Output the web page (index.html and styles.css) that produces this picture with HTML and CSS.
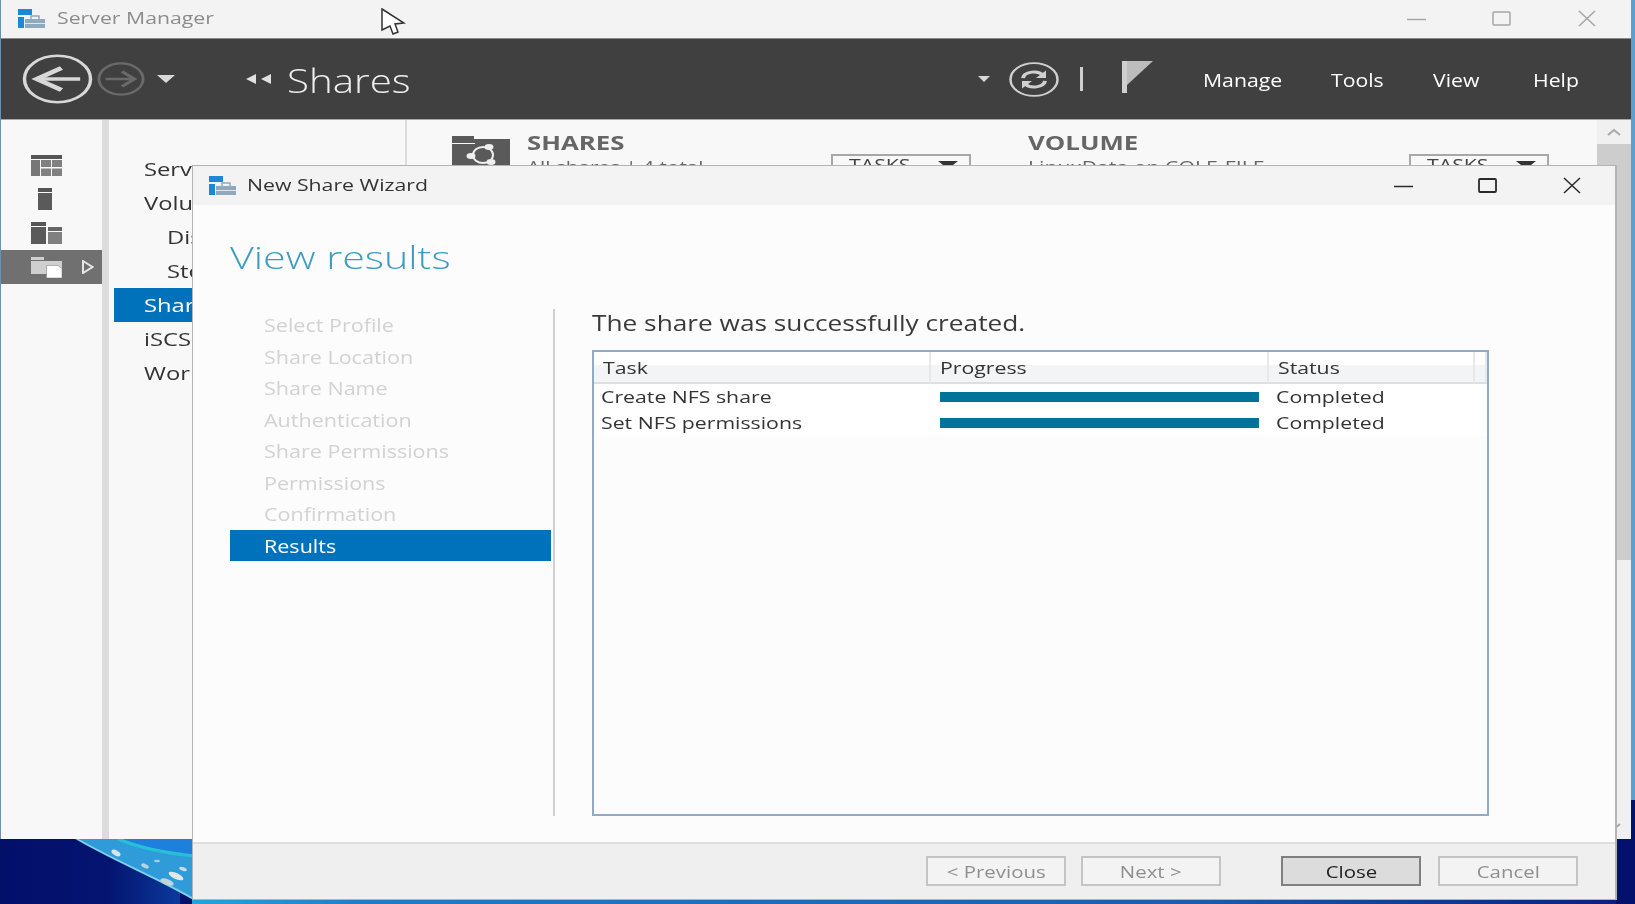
FILE: index.html
```html
<!DOCTYPE html>
<html lang="en">
<head>
    <title>Server Manager - New Share Wizard</title>
    <link rel="stylesheet" href="styles.css">
</head>
<body>
    <div class="desktop">
        <!-- wallpaper, only the corners show behind the windows -->
        <svg class="wallpaper" width="1635" height="904" viewBox="0 0 1635 904">
            <defs>
                <linearGradient id="strip" x1="0" y1="0" x2="1" y2="0">
                    <stop offset="0" stop-color="#25a5dc"/>
                    <stop offset="0.12" stop-color="#1f7cc9"/>
                    <stop offset="0.7" stop-color="#1c5cb0"/>
                    <stop offset="1" stop-color="#0a1f80"/>
                </linearGradient>
                <linearGradient id="navy" x1="0" y1="0" x2="1" y2="0">
                    <stop offset="0" stop-color="#03106a"/>
                    <stop offset="0.6" stop-color="#041470"/>
                    <stop offset="1" stop-color="#0b3a9c"/>
                </linearGradient>
            </defs>
            <rect width="1635" height="904" fill="#04116c"/>
            <rect x="0" y="836" width="180" height="68" fill="url(#navy)"/>
            <rect x="1631" y="0" width="4" height="800" fill="#5f9fd0"/>
            <rect x="0" y="0" width="2" height="839" fill="#6d8fb0"/>
            <path d="M72 836 L200 836 L230 904 L202 904 C160 878 115 862 72 836 Z" fill="#2f9bd8"/>
            <path d="M72 836 C115 862 160 878 202 904" fill="none" stroke="#7fd0ea" stroke-width="2"/>
            <path d="M118 839 C140 848 165 853 194 856 L194 839 Z" fill="#1d80dc"/>
            <path d="M118 839 C140 848 165 853 194 856" fill="none" stroke="#28c0d8" stroke-width="3"/>
            <ellipse cx="116" cy="853" rx="5" ry="2.5" fill="#d8e4ec" transform="rotate(30 116 853)"/>
            <ellipse cx="145" cy="866" rx="4" ry="2" fill="#b8d4e4" transform="rotate(25 145 866)"/>
            <ellipse cx="157" cy="861" rx="3" ry="1.2" fill="#a8cce0"/>
            <ellipse cx="176" cy="876" rx="8" ry="3" fill="#e0e8ec" transform="rotate(25 176 876)"/>
            <ellipse cx="183" cy="869" rx="4" ry="1.8" fill="#c8dce8" transform="rotate(20 183 869)"/>
            <ellipse cx="167" cy="882" rx="7" ry="3" fill="#c0d4dc" transform="rotate(20 167 882)"/>
            <rect x="192" y="899" width="1424" height="5" fill="url(#strip)"/>
        </svg>

        <div class="manager-window">
            <div class="manager-title">
                <svg class="app-icon" width="27" height="20" viewBox="0 0 27 20">
                    <rect x="0" y="0" width="14" height="6" fill="#1e88d8"/>
                    <rect x="0" y="8" width="6" height="11" fill="#1e88d8"/>
                    <path d="M7 10 H27 V19 H7 Z" fill="#8fa9bd"/>
                    <path d="M13 10 V7 H21 V10" fill="none" stroke="#8fa9bd" stroke-width="1.5"/>
                    <rect x="7" y="14" width="20" height="1" fill="#dfe8ee"/>
                </svg>
                <span class="manager-name stretch">Server Manager</span>
                <div class="window-buttons">
                    <svg width="20" height="20" viewBox="0 0 20 20"><path d="M0 10.5 H19" stroke="#a6a6a6" stroke-width="1.5"/></svg>
                    <svg width="20" height="20" viewBox="0 0 20 20"><rect x="1" y="3" width="17" height="13" rx="1" fill="none" stroke="#a6a6a6" stroke-width="1.5"/></svg>
                    <svg width="20" height="20" viewBox="0 0 20 20"><path d="M2 2 L18 17 M18 2 L2 17" stroke="#a6a6a6" stroke-width="1.5"/></svg>
                </div>
            </div>

            <div class="toolbar">
                <svg class="nav-back" width="71" height="50" viewBox="0 0 72 72" preserveAspectRatio="none">
                    <circle cx="36" cy="36" r="33.5" fill="none" stroke="#d8d8d8" stroke-width="3.5"/>
                    <path d="M59 36 H20" fill="none" stroke="#d8d8d8" stroke-width="5"/>
                    <path d="M40 20 L15 36 L40 52" fill="none" stroke="#d8d8d8" stroke-width="6"/>
                </svg>
                <svg class="nav-forward" width="48" height="34" viewBox="0 0 50 50" preserveAspectRatio="none">
                    <circle cx="25" cy="25" r="23" fill="none" stroke="#6a6a6a" stroke-width="3"/>
                    <path d="M9 25 H36 M26 14 L39 25 L26 36" fill="none" stroke="#6a6a6a" stroke-width="4"/>
                </svg>
                <span class="caret caret-big"></span>
                <svg class="crumb-arrows" width="25" height="10" viewBox="0 0 25 10">
                    <path d="M0 5 L10 0 V10 Z M15 5 L25 0 V10 Z" fill="#e0e0e0"/>
                </svg>
                <div class="crumb"><span class="stretch">Shares</span></div>
                <span class="caret caret-small"></span>
                <svg class="refresh" width="50" height="35" viewBox="0 0 50 50" preserveAspectRatio="none">
                    <circle cx="25" cy="25" r="23.5" fill="none" stroke="#cfcfcf" stroke-width="2.5"/>
                    <path d="M14 23 C15 14 29 11 34 19 M36 27 C35 36 21 39 16 31" fill="none" stroke="#cfcfcf" stroke-width="4"/>
                    <path d="M37 12 V23 H27 Z M13 38 V27 H23 Z" fill="#cfcfcf"/>
                </svg>
                <span class="toolbar-sep"></span>
                <svg class="flag" width="31" height="32" viewBox="0 0 31 32">
                    <rect x="0" y="0" width="5" height="32" fill="#cfcfcf"/>
                    <path d="M5 0 H31 L5 24 Z" fill="#bdbdbd"/>
                </svg>
                <nav class="menu">
                    <span><span class="stretch">Manage</span></span>
                    <span><span class="stretch">Tools</span></span>
                    <span><span class="stretch">View</span></span>
                    <span><span class="stretch">Help</span></span>
                </nav>
            </div>

            <div class="manager-body">
                <div class="icon-bar">
                    <div class="icon-row">
                        <svg width="31" height="21" viewBox="0 0 31 21">
                            <rect width="31" height="4" fill="#555"/>
                            <path d="M0 5 H9 V21 H0 Z" fill="#777"/>
                            <path d="M10 5 H20 V12 H10 Z M21 5 H31 V12 H21 Z M10 13.500 H20 V21 H10 Z M21 13.500 H31 V21 H21 Z" fill="#808080"/>
                        </svg>
                    </div>
                    <div class="icon-row">
                        <svg class="icon-server" width="14" height="22" viewBox="0 0 14 22">
                            <rect width="14" height="4" fill="#555"/>
                            <rect y="5" width="14" height="17" fill="#5a5a5a"/>
                        </svg>
                    </div>
                    <div class="icon-row">
                        <svg width="31" height="22" viewBox="0 0 31 22">
                            <rect width="15" height="4" fill="#555"/>
                            <rect y="5" width="15" height="17" fill="#5a5a5a"/>
                            <rect x="17" y="5" width="14" height="4" fill="#666"/>
                            <rect x="17" y="10" width="14" height="12" fill="#808080"/>
                        </svg>
                    </div>
                    <div class="icon-row icon-row-active">
                        <svg width="31" height="21" viewBox="0 0 31 21">
                            <path d="M0 0 H13 V3 H0 Z" fill="#cfcfcf"/>
                            <path d="M0 4 H31 V17 H0 Z" fill="#cfcfcf"/>
                            <path d="M15.500 8.500 H27 L31 11.500 V21 H15.500 Z" fill="#fff" stroke="#8a8a8a" stroke-width="0.6"/>
                        </svg>
                        <svg class="row-arrow" width="12" height="14" viewBox="0 0 12 14">
                            <path d="M1 1 L10.500 7 L1 13 Z" fill="none" stroke="#e6e6e6" stroke-width="2"/>
                        </svg>
                    </div>
                </div>
                <div class="splitter"></div>
                <ul class="section-list">
                    <li><span class="stretch">Servers</span></li>
                    <li><span class="stretch">Volumes</span></li>
                    <li class="sub"><span class="stretch">Disks</span></li>
                    <li class="sub"><span class="stretch">Storage Pools</span></li>
                    <li class="selected"><span class="stretch">Shares</span></li>
                    <li><span class="stretch">iSCSI</span></li>
                    <li><span class="stretch">Work Folders</span></li>
                </ul>
                <div class="shares-page">
                    <svg class="shares-icon" width="58" height="46" viewBox="0 0 58 46">
                        <path d="M0 0 H22 V3 H58 V46 H0 Z" fill="#5a5a5a"/>
                        <path d="M0 7 H23 V8 H0 Z" fill="#f8f8f8"/>
                        <ellipse cx="31" cy="19" rx="10" ry="8" fill="none" stroke="#f0f0f0" stroke-width="2"/>
                        <ellipse cx="37" cy="11" rx="4.5" ry="3" fill="#f0f0f0"/>
                        <ellipse cx="19" cy="20" rx="4.5" ry="3" fill="#f0f0f0"/>
                        <ellipse cx="39" cy="26" rx="4.5" ry="3" fill="#f0f0f0"/>
                    </svg>
                    <div class="panel-head panel-shares">
                        <h2 class="stretch">SHARES</h2>
                        <p class="stretch">All shares | 4 total</p>
                    </div>
                    <div class="tasks"><span class="stretch">TASKS</span><span class="caret caret-tasks"></span></div>
                    <div class="panel-head panel-volume">
                        <h2 class="stretch">VOLUME</h2>
                        <p class="stretch">LinuxData on COLE-FILE</p>
                    </div>
                    <div class="tasks"><span class="stretch">TASKS</span><span class="caret caret-tasks"></span></div>
                </div>
                <div class="scrollbar">
                    <div class="scroll-btn">
                        <svg width="14" height="8" viewBox="0 0 14 8"><path d="M1 7 L7 2 L13 7" fill="none" stroke="#a8a8a8" stroke-width="2"/></svg>
                    </div>
                    <div class="scroll-thumb"></div>
                    <div class="scroll-btn scroll-down">
                        <svg width="14" height="8" viewBox="0 0 14 8"><path d="M1 1 L7 6 L13 1" fill="none" stroke="#a8a8a8" stroke-width="2"/></svg>
                    </div>
                </div>
            </div>
        </div>

        <div class="wizard">
            <div class="wizard-title">
                <svg class="app-icon" width="27" height="20" viewBox="0 0 27 20">
                    <rect x="0" y="0" width="14" height="6" fill="#1e88d8"/>
                    <rect x="0" y="8" width="6" height="11" fill="#1e88d8"/>
                    <path d="M7 10 H27 V19 H7 Z" fill="#8fa9bd"/>
                    <path d="M13 10 V7 H21 V10" fill="none" stroke="#8fa9bd" stroke-width="1.5"/>
                    <rect x="7" y="14" width="20" height="1" fill="#dfe8ee"/>
                </svg>
                <span class="wizard-name stretch">New Share Wizard</span>
                <div class="wizard-buttons">
                    <svg width="20" height="20" viewBox="0 0 20 20"><path d="M0 10.500 H19" stroke="#2a2a2a" stroke-width="1.500"/></svg>
                    <svg width="20" height="20" viewBox="0 0 20 20"><rect x="1" y="3" width="17" height="13" rx="1" fill="none" stroke="#2a2a2a" stroke-width="1.800"/></svg>
                    <svg width="20" height="20" viewBox="0 0 20 20"><path d="M2 2 L18 17 M18 2 L2 17" stroke="#2a2a2a" stroke-width="1.500"/></svg>
                </div>
            </div>

            <div class="wizard-body">
                <h1 class="wizard-heading">View results</h1>
                <div class="wizard-columns">
                    <ul class="steps">
                        <li><span class="stretch">Select Profile</span></li>
                        <li><span class="stretch">Share Location</span></li>
                        <li><span class="stretch">Share Name</span></li>
                        <li><span class="stretch">Authentication</span></li>
                        <li><span class="stretch">Share Permissions</span></li>
                        <li><span class="stretch">Permissions</span></li>
                        <li><span class="stretch">Confirmation</span></li>
                        <li class="current"><span class="stretch">Results</span></li>
                    </ul>
                    <div class="results">
                        <p class="success"><span class="stretch">The share was successfully created.</span></p>
                        <div class="task-list">
                            <div class="task-head">
                                <span><span class="stretch">Task</span></span>
                                <span><span class="stretch">Progress</span></span>
                                <span><span class="stretch">Status</span></span>
                                <span></span>
                            </div>
                            <div class="task-rows">
                                <div class="task-row">
                                    <span class="stretch">Create NFS share</span>
                                    <div class="bar"></div>
                                    <span class="stretch">Completed</span>
                                </div>
                                <div class="task-row">
                                    <span class="stretch">Set NFS permissions</span>
                                    <div class="bar"></div>
                                    <span class="stretch">Completed</span>
                                </div>
                            </div>
                        </div>
                    </div>
                </div>
            </div>

            <div class="wizard-footer">
                <button disabled><span>&lt; Previous</span></button>
                <button disabled><span>Next &gt;</span></button>
                <button class="primary"><span>Close</span></button>
                <button disabled><span>Cancel</span></button>
            </div>
        </div>

        <svg class="cursor" width="26" height="28" viewBox="0 0 26 28">
            <path d="M2 1 L24 15 L15 16 L18 24 L13 26 L10 18 L2 22 Z" fill="#fff" stroke="#333" stroke-width="1.500"/>
        </svg>
    </div>
</body>
</html>
```

FILE: styles.css
```css
body {
    margin: 0;
    padding: 0;
    overflow: hidden;
    font-family: "Open Sans", "Noto Sans", sans-serif;
    color: #333;
    background-color: #04116c;
}

.desktop {
    position: relative;
    width: 1635px;
    height: 904px;
    overflow: hidden;
    filter: blur(0.6px);
}

.wallpaper {
    position: absolute;
    left: 0;
    top: 0;
}

/* the screen was captured wider than it really is, so text is pulled out sideways */
.stretch {
    display: inline-block;
    transform: scaleX(1.25);
    transform-origin: 0 50%;
}

/* Server Manager window behind the wizard */
.manager-window {
    position: absolute;
    left: 1px;
    top: 0;
    width: 1630px;
    height: 839px;
    display: flex;
    flex-direction: column;
    background-color: #f8f8f8;
}

.manager-title {
    height: 38px;
    display: flex;
    align-items: center;
    padding-left: 17px;
    background-color: #f3f3f3;
}

.manager-name {
    margin-left: 12px;
    margin-top: -3px;
    font-size: 17px;
    color: #8c8c8c;
}

.window-buttons {
    margin-left: auto;
    margin-right: 34px;
    display: flex;
    gap: 65px;
}

.toolbar {
    height: 80px;
    display: flex;
    align-items: center;
    padding-left: 21px;
    background-color: #404040;
    border-top: 1px solid #8a8a8a;
    border-bottom: 1px solid #a8a8a8;
    color: #fff;
}

.nav-forward {
    margin-left: 4px;
}

.caret {
    display: inline-block;
    width: 0;
    height: 0;
    border-left: 9px solid transparent;
    border-right: 9px solid transparent;
    border-top: 8px solid #d8d8d8;
}

.caret-big {
    margin-left: 12px;
}

.crumb-arrows {
    margin-left: 71px;
}

.crumb {
    flex: 1;
    margin-left: 16px;
    margin-top: 3px;
    font-size: 33px;
    font-weight: 300;
    color: #eee;
}

.crumb .stretch {
    transform: scaleX(1.22);
}

.caret-small {
    border-left-width: 6px;
    border-right-width: 6px;
    border-top-width: 6px;
}

.refresh {
    margin-left: 19px;
}

.toolbar-sep {
    width: 3px;
    height: 24px;
    margin-left: 21px;
    background-color: #cfcfcf;
}

.flag {
    margin-left: 39px;
    margin-top: -5px;
}

.menu {
    display: grid;
    grid-template-columns: 128px 102px 100px 98px;
    margin-left: 50px;
    margin-top: 2px;
    font-size: 18px;
}

.menu .stretch {
    transform: scaleX(1.18);
}

.manager-body {
    flex: 1;
    display: flex;
    overflow: hidden;
}

.icon-bar {
    width: 101px;
    padding-top: 28px;
    box-sizing: border-box;
}

.icon-row {
    height: 34px;
    display: flex;
    align-items: center;
    padding-left: 30px;
}

.icon-row-active {
    background-color: #707070;
}

.icon-server {
    margin-left: 7px;
}

.row-arrow {
    margin-left: 20px;
}

.splitter {
    width: 7px;
    background-color: #dcdcdc;
}

.section-list {
    width: 298px;
    margin: 0;
    padding: 32px 0 0 5px;
    box-sizing: border-box;
    list-style: none;
    font-size: 19px;
    border-right: 2px solid #dcdcdc;
}

.section-list li {
    height: 34px;
    line-height: 34px;
    padding-left: 30px;
}

.section-list .sub {
    padding-left: 53px;
}

.section-list .selected {
    background-color: #0072bc;
    color: #fff;
}

.shares-page {
    flex: 1;
    display: flex;
    align-items: flex-start;
    padding: 10px 0 0 45px;
}

.shares-icon {
    margin-top: 6px;
}

.panel-head {
    margin-left: 17px;
}

.panel-shares {
    width: 304px;
}

.panel-volume {
    width: 381px;
    margin-left: 57px;
}

.panel-head h2 {
    display: block;
    margin: 0;
    font-size: 20px;
    line-height: 26px;
    font-weight: 700;
    color: #666;
    transform: scaleX(1.29);
}

.panel-head p {
    display: block;
    margin: -1px 0 0;
    font-size: 17px;
    color: #666;
    transform: scaleX(1.22);
}

.panel-volume p {
    transform: scaleX(1.25);
}

.tasks {
    width: 140px;
    height: 40px;
    margin-top: 24px;
    box-sizing: border-box;
    display: flex;
    align-items: flex-start;
    padding-left: 16px;
    border: 2px solid #a8a8a8;
    font-size: 17px;
    line-height: 18px;
    color: #444;
}

.caret-tasks {
    margin: 5px 11px 0 auto;
    border-left-width: 10px;
    border-right-width: 10px;
    border-top-color: #333;
}

.scrollbar {
    width: 34px;
    display: flex;
    flex-direction: column;
    background-color: #f0f0f0;
}

.scroll-btn {
    height: 24px;
    flex: none;
    display: flex;
    align-items: center;
    justify-content: center;
}

.scroll-thumb {
    height: 416px;
    background-color: #cdcdcd;
}

.scroll-down {
    margin-top: auto;
}

/* New Share Wizard on top */
.wizard {
    position: absolute;
    left: 192px;
    top: 165px;
    width: 1425px;
    height: 735px;
    box-sizing: border-box;
    display: flex;
    flex-direction: column;
    background-color: #fcfcfc;
    border: 1px solid #b4b4b4;
    border-right-width: 2px;
}

.wizard-title {
    height: 39px;
    flex: none;
    display: flex;
    align-items: center;
    padding-left: 16px;
    background-color: #f3f3f3;
}

.wizard-name {
    margin-left: 11px;
    margin-top: -2px;
    font-size: 17px;
    color: #333;
}

.wizard-buttons {
    margin-left: auto;
    margin-right: 33px;
    display: flex;
    gap: 64px;
}

.wizard-body {
    flex: 1;
    padding: 27px 0 0 37px;
}

.wizard-heading {
    width: 200px;
    margin: 0 0 27px;
    font-size: 32px;
    line-height: 50px;
    font-weight: 300;
    color: #3f9bbf;
    transform: scaleX(1.287);
    transform-origin: 0 50%;
}

.wizard-columns {
    display: flex;
    height: 507px;
}

.steps {
    width: 321px;
    margin: 0 2px 0 0;
    padding: 0;
    list-style: none;
    font-size: 17.5px;
    color: #d2d2d2;
}

.steps .stretch {
    transform: scaleX(1.23);
}

.steps li {
    height: 31.5px;
    line-height: 33px;
    padding-left: 34px;
}

.steps .current {
    background-color: #0072bc;
    color: #fff;
}

.results {
    flex: 1;
    padding-left: 37px;
    border-left: 2px solid #d0d0d0;
    padding-right: 126px;
}

.success {
    margin: 0 0 13px;
    height: 28px;
    font-size: 21px;
    line-height: 28px;
    color: #3a3a3a;
}

.task-list {
    height: 466px;
    box-sizing: border-box;
    border: 2px solid #8fabc8;
    font-size: 17px;
}

.task-head {
    height: 30px;
    display: grid;
    grid-template-columns: 337px 338px 206px 1fr;
    background: linear-gradient(#fff 45%, #f3f4f6 45%);
    border-bottom: 2px solid #dcdfe2;
}

.task-head > span {
    padding-left: 9px;
    line-height: 31px;
    border-right: 2px solid #e6e8ea;
}

.task-rows {
    background-color: #fff;
}

.task-row {
    height: 26px;
    display: grid;
    grid-template-columns: 337px 338px 1fr;
    align-items: center;
    padding-left: 7px;
}

.task-row .stretch {
    margin-top: -2px;
}

.bar {
    width: 319px;
    height: 10px;
    margin-left: 2px;
    background-color: #007399;
}

.wizard-footer {
    height: 57px;
    flex: none;
    display: flex;
    align-items: flex-start;
    padding: 12px 0 0 733px;
    box-sizing: border-box;
    background-color: #efefef;
    border-top: 2px solid #dedede;
}

button {
    width: 140px;
    height: 30px;
    margin-right: 15px;
    box-sizing: border-box;
    font-family: inherit;
    font-size: 17px;
    background-color: #f3f3f3;
    border: 2px solid #c4c4c4;
    color: #8f8f8f;
    padding: 0;
}

button span {
    display: inline-block;
    transform: scaleX(1.2);
}

button:nth-child(2) {
    margin-right: 60px;
}

.primary {
    margin-right: 17px;
    background-color: #dcdcdc;
    border-color: #808080;
    color: #222;
}

.cursor {
    position: absolute;
    left: 380px;
    top: 8px;
}
```
